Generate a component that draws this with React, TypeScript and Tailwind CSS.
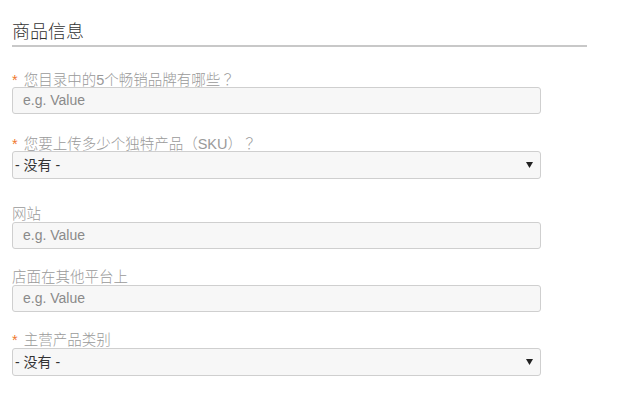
const fields = [
  { label: '您目录中的5个畅销品牌有哪些？', required: true, type: 'input', gap: 'mt-[24px]' },
  { label: '您要上传多少个独特产品（SKU）？', required: true, type: 'select', gap: 'mt-[21px]' },
  { label: '网站', required: false, type: 'input', gap: 'mt-[27px]' },
  { label: '店面在其他平台上', required: false, type: 'input', gap: 'mt-[20px]' },
  { label: '主营产品类别', required: true, type: 'select', gap: 'mt-[20px]' },
];

// full-width punctuation is centred in the screenshot, as the TC face draws it
const LabelText = ({ text }: { text: string }) => (
  <>
    {text.split(/([（）？])/).map((part, i) =>
      /[（）？]/.test(part) ? (
        <span key={i} className="font-['Noto_Sans_CJK_TC',sans-serif]">{part}</span>
      ) : (
        <span key={i}>{part}</span>
      )
    )}
  </>
);

const App = () => {
  return (
    <div
      className="min-h-[399px] bg-white pl-[12px] pt-[20px] [text-spacing-trim:space-all]"
      style={{ fontFamily: '"Liberation Sans", "Noto Sans CJK SC", sans-serif' }}
    >
      <div className="w-[575px]">
        <h2 className="border-b-2 border-[#c8c8c8] pb-[1px] text-[18px] font-light leading-[24px] text-[#333]">商品信息</h2>

        {fields.map((f, i) => (
          <div key={i} className={f.gap}>
            <label className="block h-[16px] text-[14.5px] font-light leading-[16px] text-[#9a9a9a]">
              {f.required && <span className="mr-[6px] text-[#f0782d]">*</span>}
              <LabelText text={f.label} />
            </label>
            {f.type === 'input' ? (
              <div className="flex h-[27px] w-[529px] items-center rounded-[3px] border border-[#cfcfcf] bg-[#f7f7f7] pl-[10px] text-[14px] text-[#8a8a8a]">
                e.g. Value
              </div>
            ) : (
              <div className="flex h-[28px] w-[529px] items-center justify-between rounded-[3px] border border-[#cfcfcf] bg-[#f7f7f7] pl-[2px] pr-[7px] text-[14px] text-[#333]">
                <span>- 没有 -</span>
                <svg width="7" height="6" viewBox="0 0 7 6">
                  <path d="M0 0 L7 0 L3.5 6 Z" fill="#222" />
                </svg>
              </div>
            )}
          </div>
        ))}
      </div>
    </div>
  );
};

export default App;
